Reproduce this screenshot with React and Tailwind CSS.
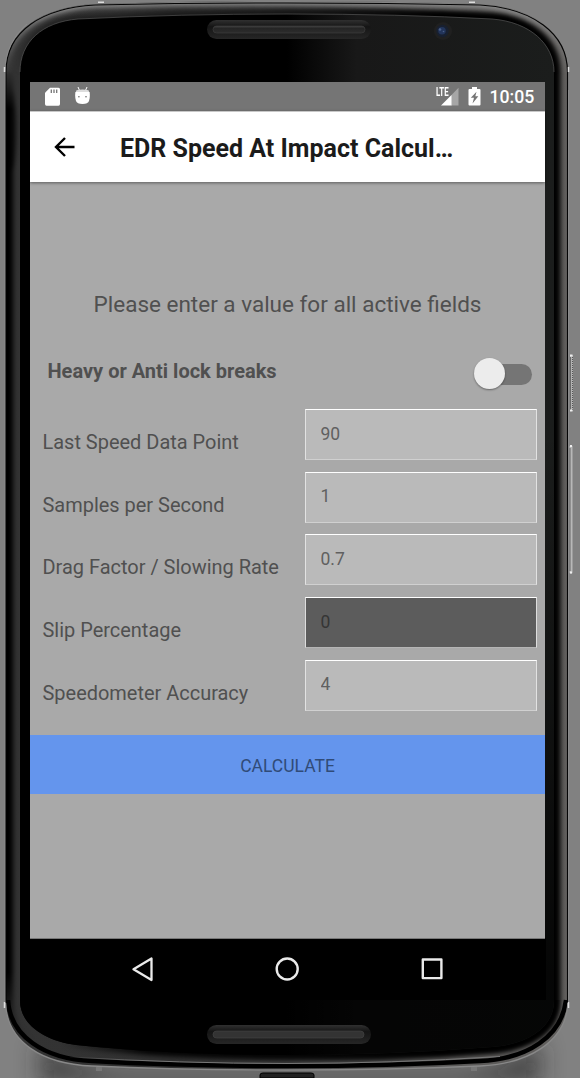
import React, { useState } from "react";

function PhoneFrame() {
  const outer =
    "M5.500 72 C5.500 30 42 7 95 4 Q190 1 287 1 Q390 1 480 4 C532 7 568 32 568 72 V1003 C566 1042 528 1064 480 1066 Q390 1070 287 1070 Q180 1070 92 1066 C42 1064 7 1042 5.500 1003 Z";
  const inner =
    "M20 72 C20 42 42 22 78 19 Q180 14 287 14 Q400 14 492 19 C530 22 554 44 554 72 V1001 C554 1026 530 1044 492 1047 Q390 1055 287 1055 Q170 1055 76 1045 C44 1041 20 1024 20 1001 Z";
  return (
    <svg className="absolute inset-0" width="580" height="1078" viewBox="0 0 580 1078" aria-hidden="true">
      <defs>
        <linearGradient id="glass" x1="20" x2="554" y1="0" y2="0" gradientUnits="userSpaceOnUse">
          <stop offset="0" stopColor="#000" />
          <stop offset=".5" stopColor="#000" />
          <stop offset=".63" stopColor="#181818" />
          <stop offset="1" stopColor="#1b1d1c" />
        </linearGradient>
        <linearGradient id="glassFade" x1="0" x2="0" y1="0" y2="1">
          <stop offset=".4" stopColor="#000" stopOpacity="0" />
          <stop offset=".93" stopColor="#000" stopOpacity=".8" />
        </linearGradient>
        <linearGradient id="rim" x1="5" x2="568" y1="0" y2="0" gradientUnits="userSpaceOnUse">
          <stop offset="0" stopColor="#333" />
          <stop offset=".3" stopColor="#323232" />
          <stop offset=".6" stopColor="#505050" />
          <stop offset="1" stopColor="#62605e" />
        </linearGradient>
        <linearGradient id="toRight" x1="120" x2="440" y1="0" y2="0" gradientUnits="userSpaceOnUse">
          <stop offset="0" stopColor="#000" />
          <stop offset="1" stopColor="#fff" />
        </linearGradient>
        <linearGradient id="toBottom" x1="60" x2="150" y1="0" y2="0" gradientUnits="userSpaceOnUse">
          <stop offset="0" stopColor="#000" />
          <stop offset="1" stopColor="#fff" />
        </linearGradient>
        <linearGradient id="toTop" x1="0" x2="0" y1="10" y2="75" gradientUnits="userSpaceOnUse">
          <stop offset="0" stopColor="#fff" />
          <stop offset="1" stopColor="#000" />
        </linearGradient>
        <linearGradient id="leftSide" x1="0" x2="0" y1="70" y2="1040" gradientUnits="userSpaceOnUse">
          <stop offset="0" stopColor="#000" />
          <stop offset=".04" stopColor="#fff" />
          <stop offset=".93" stopColor="#fff" />
          <stop offset="1" stopColor="#000" />
        </linearGradient>
        <mask id="rightMask" maskUnits="userSpaceOnUse" x="0" y="0" width="580" height="1078"><rect width="580" height="1078" fill="url(#toRight)" /></mask>
        <mask id="bottomMask" maskUnits="userSpaceOnUse" x="0" y="0" width="580" height="1078"><rect y="1000" width="580" height="78" fill="url(#toBottom)" /></mask>
        <mask id="topMask" maskUnits="userSpaceOnUse" x="0" y="0" width="580" height="1078"><rect width="580" height="80" fill="url(#toTop)" /></mask>
        <mask id="leftMask" maskUnits="userSpaceOnUse" x="0" y="0" width="580" height="1078"><rect width="50" height="1078" fill="url(#leftSide)" /></mask>
        <linearGradient id="slot" x1="0" x2="0" y1="0" y2="1">
          <stop offset="0" stopColor="#303030" />
          <stop offset=".35" stopColor="#151515" />
          <stop offset="1" stopColor="#262626" />
        </linearGradient>
        <linearGradient id="bar" x1="0" x2="0" y1="0" y2="1">
          <stop offset="0" stopColor="#404040" />
          <stop offset=".35" stopColor="#252525" />
          <stop offset="1" stopColor="#2c2c2c" />
        </linearGradient>
        <clipPath id="body"><path d={outer} /></clipPath>
        <filter id="soft" filterUnits="userSpaceOnUse" x="-20" y="-20" width="620" height="1120"><feGaussianBlur stdDeviation="2.5" /></filter>
        <filter id="shade" filterUnits="userSpaceOnUse" x="-60" y="900" width="700" height="260"><feGaussianBlur stdDeviation="12" /></filter>
      </defs>
      <rect width="580" height="1078" fill="#818181" />
      <path d="M40 1040Q70 1066 120 1070H460Q510 1066 540 1040V1084H40Z" fill="#222" opacity=".65" filter="url(#shade)" />
      <rect x="570" y="355" width="3" height="56" rx="1" fill="#b2b2b2" />
      <path d="M572.500 357V410" stroke="#555" strokeDasharray="1 1" />
      <path d="M570.500 357V410" stroke="#6a6a6a" />
      <rect x="569.500" y="445.500" width="3" height="128" rx="1" fill="#b8b8b8" />
      <path d="M570 448V571" stroke="#666" />
      <path d="M570 355.500h2.500M570 410.500h2.500M570 446h2M570 572.500h2" stroke="#eee" strokeWidth="2" />
      <path d={outer} fill="url(#rim)" />
      <g clipPath="url(#body)">
        <g mask="url(#rightMask)">
          <path d={inner} fill="none" stroke="#000" strokeWidth="13" filter="url(#soft)" />
        </g>
        <g mask="url(#bottomMask)">
          <path d={inner} fill="none" stroke="#000" strokeWidth="7" filter="url(#soft)" />
        </g>
        <g mask="url(#topMask)">
          <path d={outer} fill="none" stroke="#8a8a8a" strokeWidth="8" filter="url(#soft)" />
          <path d={inner} fill="none" stroke="#000" strokeWidth="4" opacity=".65" filter="url(#soft)" />
        </g>
        <g mask="url(#leftMask)">
          <path d={outer} fill="none" stroke="#000" strokeWidth="15" filter="url(#soft)" />
          <ellipse cx="10" cy="130" rx="6" ry="40" fill="#000" opacity=".6" filter="url(#soft)" />
        </g>
        <path d="M8 1000C10 1036 44 1059 92 1061Q180 1066 287 1066Q390 1066 480 1061C528 1059 562 1036 566 1000" fill="none" stroke="#000" strokeWidth="4.500" />
        <path d="M70 1057Q180 1063.500 287 1063.500Q390 1063.500 500 1056.500" fill="none" stroke="#777" strokeWidth="1" mask="url(#bottomMask)" />
      </g>
      <path d={inner} fill="url(#glass)" />
      <path d={inner} fill="url(#glassFade)" />
      <path d="M20 72C20 42 42 22 78 19Q180 14 287 14Q400 14 492 19C530 22 554 44 554 72" fill="none" stroke="#555" strokeWidth=".7" />
      <path d="M6 1003V72C6 31 42 8 95 5Q190 3 287 3Q390 3 480 5C532 8 567.500 33 567.500 72V1003" fill="none" stroke="#050505" strokeWidth="1.100" />
      <path d="M5 1003V72C5 52 13 36 27 24M568.500 90V1003" fill="none" stroke="#8e8e8e" strokeWidth=".8" />
      <path d="M5.500 1003C7 1042 42 1064 92 1066Q180 1070 287 1070Q390 1070 480 1066C528 1064 566 1042 568 1003" fill="none" stroke="#888" strokeWidth="1.400" />
      <path d="M98 2.200h6M469 2.200h6M4.500 67v5M568.500 67v5M4.500 1002v6M568.500 1002v6" stroke="#ddd" strokeWidth="1.500" />
      <path d="M96 1069h6M471 1069h6" stroke="#777" strokeWidth="4" />
      <path d="M260 1078V1075Q260 1073 263 1073H311Q314 1073 314 1075V1078Z" fill="#222" stroke="#000" />
      <rect x="207" y="20" width="164" height="19" rx="9.500" fill="url(#slot)" />
      <rect x="213" y="26" width="152" height="7" rx="3.500" fill="url(#bar)" stroke="#3c3c3c" strokeWidth=".7" />
      <rect x="207" y="1025" width="164" height="19" rx="9.500" fill="url(#slot)" />
      <rect x="213" y="1031" width="151" height="7" rx="3.500" fill="#333" stroke="#444" strokeWidth=".7" />
      <circle cx="443" cy="31" r="9" fill="#202020" />
      <circle cx="442.500" cy="31" r="6.200" fill="#182030" />
      <circle cx="442" cy="30.800" r="3.800" fill="#22345a" />
      <circle cx="440" cy="29.500" r="1.300" fill="#4a5f88" />
      <circle cx="443.500" cy="31.500" r=".8" fill="#4a5f88" />
      <rect x="30" y="938" width="516" height="62" fill="#000" />
    </svg>
  );
}

function StatusBar() {
  return (
    <div className="flex h-[29px] shrink-0 items-center bg-[#757575] pr-[11px] pl-[15px] text-white">
      <svg width="15" height="19" viewBox="0 0 15 19">
        <path d="M5 .8H13.500Q15 .8 15 2.300V17Q15 18.700 13.500 18.700H1.500Q0 18.700 0 17V5.800Z" fill="#fff" />
        <path d="M6.300 2.500v3.500M9 2.500v3.500M11.700 2.500v3.500" stroke="#757575" strokeWidth="1.300" />
      </svg>
      <svg className="ml-[15px]" width="15" height="19" viewBox="0 0 15 19">
        <path d="M3 0l1.300 3M12 0l-1.300 3" stroke="#fff" strokeWidth="1" />
        <path d="M1.500 3.200Q7.500 1.700 13.500 3.200L14.300 5.300H.7Z" fill="#ddd" />
        <path d="M.4 5H14.600Q15.300 10 14 14Q13 17 7.500 17T1 14Q-.3 10 .4 5Z" fill="#fff" />
        <circle cx="3.900" cy="9.700" r=".8" fill="#666" />
        <circle cx="11" cy="9.700" r=".8" fill="#666" />
      </svg>
      <div className="relative ml-auto h-[19px] w-[23px]">
        <svg width="23" height="19" viewBox="0 0 23 19">
          <path d="M14 8.500L21.500 .8V18.500H14Z" fill="#a6a6a6" />
          <path d="M4 18.500L14.500 8V18.500Z" fill="#fff" />
        </svg>
        <span className="absolute -top-px -left-px origin-left scale-x-[.65] text-[12px] leading-[12px] font-bold">LTE</span>
      </div>
      <svg className="ml-[8.500px]" width="13" height="19" viewBox="0 0 13 19">
        <path d="M4 0H9V2H11.500Q12.500 2 12.500 3V17.500Q12.500 18.500 11.500 18.500H1.500Q.5 18.500 .5 17.500V3Q.5 2 1.500 2H4Z" fill="#fff" />
        <path d="M8.500 4.800L2.800 10.800H6L4.500 16.500L10.300 9.300H7.300Z" fill="#757575" />
      </svg>
      <span className="ml-[8.500px] w-[44.500px] pt-px text-[17.700px] leading-5 font-medium whitespace-nowrap">10:05</span>
    </div>
  );
}

function Field({ label, initial, disabled }) {
  const [value, setValue] = useState(initial);
  return (
    <label className="flex h-[62.700px] items-start">
      <span className="w-[262.500px] shrink-0 pt-[20px] text-[19.970px] leading-[26px] whitespace-nowrap text-[#505050]">{label}</span>
      <input
        value={value}
        onChange={(e) => setValue(e.target.value)}
        disabled={disabled}
        className={
          disabled
            ? "h-[51px] w-[232px] border border-t-white border-r-[#ddd] border-b-[#b5b5b5] border-l-[#ddd] bg-[#5c5c5c] px-[14.500px] pb-[2px] text-[17.500px] text-[#353535] outline-none"
            : "h-[51px] w-[232px] border border-t-white border-r-[#e2e2e2] border-b-[#d0d0d0] border-l-[#e2e2e2] bg-[#bababa] px-[14.500px] pb-[2px] text-[17.500px] text-[#606060] outline-none"
        }
      />
    </label>
  );
}

export default function App() {
  const [heavy, setHeavy] = useState(false);
  return (
    <div className="relative h-[1078px] w-[580px] overflow-hidden font-['Roboto',sans-serif]">
      <PhoneFrame />
      <div className="relative flex h-[1000px] flex-col pt-[82px] pr-[35px] pl-[30px]">
        <StatusBar />
        <header className="z-10 flex h-[71px] shrink-0 items-center border-t border-[#c8c8c8] bg-white pt-[2px] pl-[24px] shadow-[0_1px_3px_rgba(0,0,0,0.45)]">
          <svg className="-mt-[3px]" width="22" height="22" viewBox="0 0 22 22" fill="none" stroke="#000" strokeWidth="2.400">
            <path d="M20.500 11H2.500M11 2L2 11L11 20" />
          </svg>
          <h1 className="ml-[44px] pt-[2px] text-[25px] leading-8 font-bold whitespace-nowrap text-[#1b1b1b]">EDR Speed At Impact Calcul…</h1>
        </header>
        <main className="flex h-[757px] shrink-0 flex-col border-b border-[#777] bg-[#a9a9a9]">
          <p className="pt-[106px] text-center text-[22.500px] leading-8 whitespace-nowrap text-[#505050]">Please enter a value for all active fields</p>
          <div className="flex h-[89px] items-end justify-between pr-[13.500px] pl-[17.500px]">
            <span className="pb-[26px] text-[20px] leading-6 font-bold text-[#505050]">Heavy or Anti lock breaks</span>
            <button
              role="switch"
              aria-checked={heavy}
              onClick={() => setHeavy(!heavy)}
              className="mb-[19px] flex h-[32px] w-[58px] items-center"
            >
              <span className="mt-[1px] ml-[14px] flex h-[21px] w-[44px] items-center rounded-full bg-[#757575]">
                <span className="-mt-[2px] -ml-[14px] h-[31px] w-[31px] shrink-0 rounded-full bg-[#ececec] shadow-[0_1px_2px_rgba(0,0,0,0.4)]" />
              </span>
            </button>
          </div>
          <div className="flex flex-col pl-[12.500px]">
            <Field label="Last Speed Data Point" initial="90" />
            <Field label="Samples per Second" initial="1" />
            <Field label="Drag Factor / Slowing Rate" initial="0.7" />
            <Field label="Slip Percentage" initial="0" disabled />
            <Field label="Speedometer Accuracy" initial="4" />
          </div>
          <button className="mt-[13px] h-[58.500px] shrink-0 bg-[#6495ed] pt-[2px] text-[17.500px] text-[#304b78]">CALCULATE</button>
        </main>
        <nav className="flex h-[60px] shrink-0 items-center pl-[101px]">
          <svg width="24" height="26" viewBox="0 0 24 26" fill="none" stroke="#eaeaea" strokeWidth="2.300" strokeLinejoin="round">
            <path d="M20.500 2.500V24L2.500 13.300Z" />
          </svg>
          <svg className="ml-[119px]" width="26" height="26" viewBox="0 0 26 26" fill="none" stroke="#eaeaea" strokeWidth="2.400">
            <circle cx="13.200" cy="13" r="10.500" />
          </svg>
          <svg className="ml-[120px]" width="24" height="24" viewBox="0 0 24 24" fill="none" stroke="#eaeaea" strokeWidth="2.400" strokeLinejoin="round">
            <rect x="2.800" y="2.500" width="18.600" height="18.600" />
          </svg>
        </nav>
      </div>
    </div>
  );
}
